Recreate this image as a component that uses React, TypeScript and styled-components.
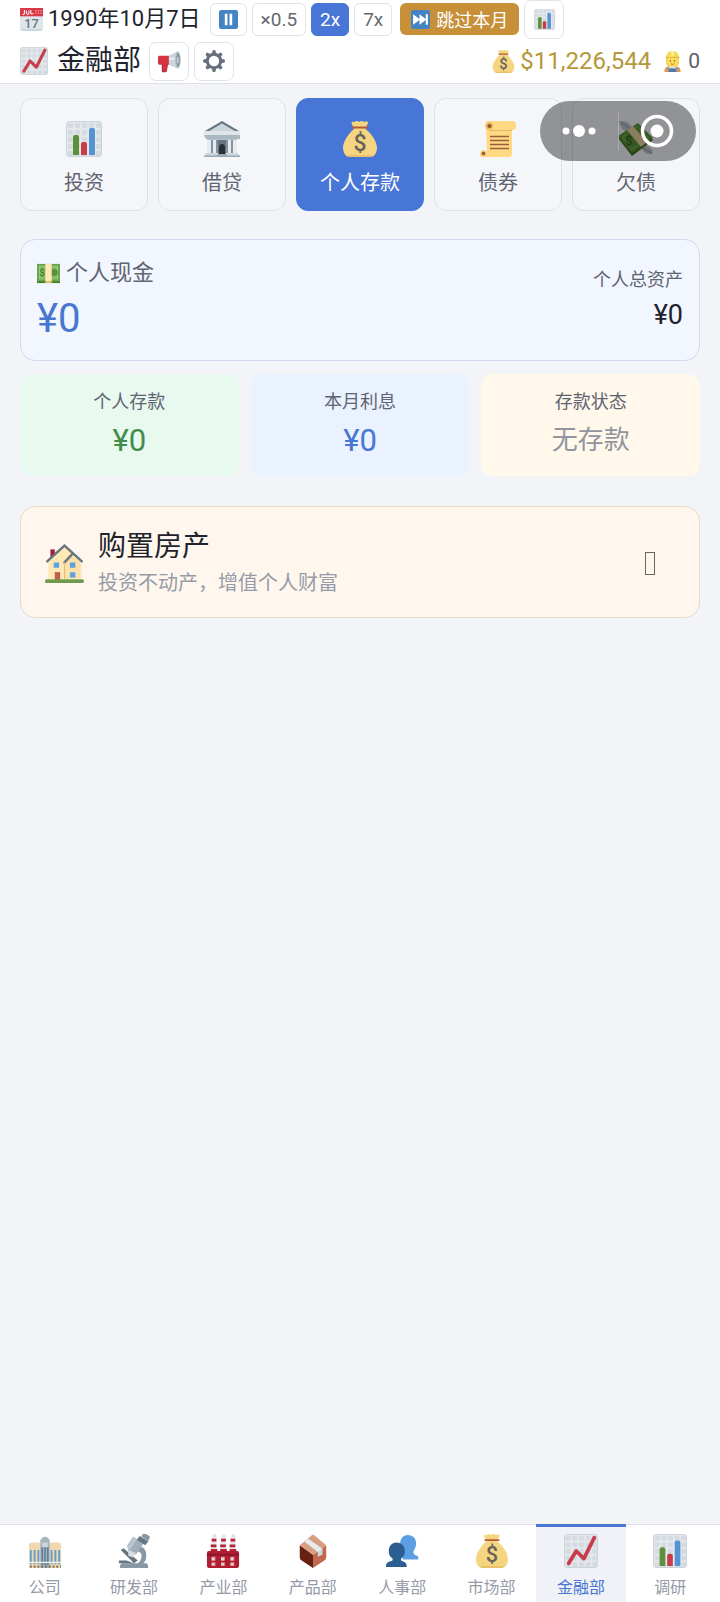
import { useState } from 'react';
import type { ReactNode } from 'react';
import styled, { createGlobalStyle } from 'styled-components';

const GlobalStyle = createGlobalStyle`
  * {
    box-sizing: border-box;
  }

  body {
    margin: 0;
    background: #f2f4f8;
    color: #20232b;
    font-family: Roboto, 'Noto Sans CJK SC', sans-serif;
  }

  button {
    margin: 0;
    padding: 0;
    border: none;
    background: none;
    color: inherit;
    font: inherit;
    cursor: pointer;
  }
`;

const Page = styled.div`
  display: flex;
  flex-direction: column;
  min-height: 100vh;
`;

const Header = styled.header`
  display: flex;
  flex-direction: column;
  gap: 4px;
  padding: 0 20px 3px;
  background: white;
  border-bottom: 1px solid #dcdfe8;
`;

const HeaderRow = styled.div`
  display: flex;
  align-items: center;
  gap: 5px;
  height: 38px;
`;

const DateText = styled.time`
  margin-right: 4px;
  font-size: 22px;
  line-height: 28px;
  white-space: nowrap;
`;

const SpeedButton = styled.button<{ $active?: boolean }>`
  display: flex;
  align-items: center;
  justify-content: center;
  height: 33px;
  padding: 0 8px;
  border: 1px solid ${(props) => (props.$active ? '#4876d6' : '#e0e2ec')};
  border-radius: 6px;
  background: ${(props) => (props.$active ? '#4876d6' : 'white')};
  color: ${(props) => (props.$active ? 'white' : '#666973')};
  font-size: 19px;
`;

const SkipButton = styled.button`
  display: flex;
  align-items: center;
  gap: 6px;
  height: 32px;
  margin-left: 3px;
  padding: 0 11px;
  border-radius: 6px;
  background: #c68f38;
  color: white;
  font-size: 18px;
  white-space: nowrap;
`;

const IconButton = styled.button`
  display: flex;
  align-items: center;
  justify-content: center;
  width: 40px;
  height: 39px;
  border: 1px solid #e0e2ec;
  border-radius: 7px;
  background: white;
`;

const Title = styled.h1`
  margin: 0 3px 0 4px;
  font-size: 28px;
  font-weight: 400;
  line-height: 36px;
`;

const Funds = styled.div`
  display: flex;
  align-items: center;
  gap: 5px;
  margin-left: auto;
  color: #b5983a;
  font-size: 24px;
`;

const Staff = styled.div`
  display: flex;
  align-items: center;
  gap: 5px;
  margin-left: 6px;
  color: #5c606b;
  font-size: 21px;
`;

const Main = styled.main`
  flex: 1;
  display: flex;
  flex-direction: column;
  padding: 14px 20px;
`;

const Tabs = styled.div`
  display: grid;
  grid-template-columns: repeat(5, 1fr);
  gap: 10px;
  margin-bottom: 28px;
`;

const Tab = styled.button<{ $active: boolean }>`
  display: flex;
  flex-direction: column;
  align-items: center;
  gap: 12px;
  padding: 22px 0 13px;
  border: 1px solid ${(props) => (props.$active ? '#4876d6' : '#dee1e8')};
  border-radius: 12px;
  background: ${(props) => (props.$active ? '#4876d6' : '#f4f6fa')};
  color: ${(props) => (props.$active ? 'white' : '#606470')};
  font-size: 20px;
  line-height: 28px;
`;

const CashCard = styled.section`
  display: flex;
  align-items: center;
  justify-content: space-between;
  margin-bottom: 13px;
  padding: 17px 16px 19px;
  border: 1px solid #d3daec;
  border-radius: 15px;
  background: #f1f6ff;
`;

const CashMain = styled.div`
  display: flex;
  flex-direction: column;
  gap: 8px;
`;

const CashLabel = styled.div`
  display: flex;
  align-items: center;
  gap: 6px;
  color: #606470;
  font-size: 22px;
  line-height: 32px;
`;

const CashValue = styled.div`
  color: #4876d0;
  font-size: 40px;
  line-height: 44px;
`;

const Assets = styled.div`
  display: flex;
  flex-direction: column;
  gap: 6px;
  text-align: right;
`;

const SmallLabel = styled.div`
  color: #606470;
  font-size: 18px;
  line-height: 26px;
`;

const AssetsValue = styled.div`
  font-size: 27px;
  line-height: 32px;
`;

const Stats = styled.section`
  display: grid;
  grid-template-columns: repeat(3, 1fr);
  gap: 12px;
  margin-bottom: 30px;
`;

const StatCard = styled.div<{ $background: string }>`
  display: flex;
  flex-direction: column;
  align-items: center;
  gap: 8px;
  padding: 15px 0 17px;
  border-radius: 12px;
  background: ${(props) => props.$background};
`;

const StatValue = styled.div<{ $color: string; $text?: boolean }>`
  color: ${(props) => props.$color};
  font-size: ${(props) => (props.$text ? '26px' : '31px')};
  line-height: ${(props) => (props.$text ? '34px' : '36px')};
`;

const EstateCard = styled.button`
  display: flex;
  align-items: center;
  gap: 14px;
  padding: 22px 44px 20px 24px;
  border: 1px solid #e6dbc6;
  border-radius: 15px;
  background: #fff7ed;
  text-align: left;
`;

const EstateText = styled.span`
  flex: 1;
  display: flex;
  flex-direction: column;
  gap: 4px;
`;

const EstateTitle = styled.span`
  font-size: 28px;
  line-height: 36px;
`;

const EstateHint = styled.span`
  color: #979ba7;
  font-size: 20px;
  line-height: 28px;
`;

const MissingGlyph = styled.span`
  width: 10px;
  height: 23px;
  border: 1px solid #666;
`;

const Capsule = styled.div`
  position: fixed;
  top: 101px;
  right: 24px;
  display: flex;
  align-items: center;
  width: 156px;
  height: 60px;
  border-radius: 30px;
  background: rgba(0, 0, 0, 0.4);
`;

const CapsuleButton = styled.button`
  flex: 1;
  display: flex;
  align-items: center;
  justify-content: center;
  height: 40px;

  & + & {
    border-left: 1px solid #aaa;
  }
`;

const BottomNav = styled.nav`
  position: sticky;
  bottom: 0;
  display: grid;
  grid-template-columns: repeat(8, 1fr);
  padding-right: 5px;
  background: white;
  box-shadow: inset 0 1px #dcdfe8;
`;

const NavItem = styled.button<{ $active: boolean }>`
  display: flex;
  flex-direction: column;
  align-items: center;
  gap: 8px;
  padding: 7px 0 2px;
  border-top: 3px solid ${(props) => (props.$active ? '#4876d0' : 'transparent')};
  background: ${(props) => (props.$active ? '#f0f2f7' : 'none')};
  color: ${(props) => (props.$active ? '#4876d0' : '#959aa8')};
  font-size: 16px;
  line-height: 24px;
`;

type IconProps = { size: number };

const Svg = ({ size, children }: IconProps & { children: ReactNode }) => (
  <svg width={size} height={size} viewBox="0 0 36 36" aria-hidden="true">
    {children}
  </svg>
);

const cells = [3, 10, 17, 24, 31];

const Grid = () => (
  <>
    <rect width="36" height="36" rx="4" fill="#ccd3da" />
    <rect x="1" y="1" width="34" height="34" rx="3" fill="#e4e8ec" />
    {cells.map((y) =>
      cells.map((x) => (
        <rect key={`${x}-${y}`} x={x - 1} y={y - 1} width="5" height="5" rx="1" fill="#d4dbe1" />
      ))
    )}
  </>
);

const BarsIcon = ({ size }: IconProps) => (
  <Svg size={size}>
    <Grid />
    <path fill="#5c913b" d="M13 34H7V16q0-2 2-2h2q2 0 2 2z" />
    <path fill="#c93d4b" d="M21 34h-6V23q0-2 2-2h2q2 0 2 2z" />
    <path fill="#5593d3" d="M29 34h-6V9q0-2 2-2h2q2 0 2 2z" />
  </Svg>
);

const TrendIcon = ({ size }: IconProps) => (
  <Svg size={size}>
    <Grid />
    <path
      d="M5 31l8-13 8 8L32 4"
      fill="none"
      stroke="#c93d4b"
      strokeWidth="4"
      strokeLinecap="round"
      strokeLinejoin="round"
    />
  </Svg>
);

const CalendarIcon = ({ size }: IconProps) => (
  <Svg size={size}>
    <path fill="#dfe6eb" d="M0 10h36v22q0 4-4 4H4q-4 0-4-4z" />
    <path fill="#ccd6dd" d="M2 33h32v1q-1 2-3 2H5q-2 0-3-2z" />
    <path fill="#d83b47" d="M0 0h36v13H0z" />
    <path d="M4 10c3 1 3-1 3-7M10 4v4q2 4 4 0V4M17 3v6h4" fill="none" stroke="#fff" strokeWidth="1.6" />
    <path d="M24 4h10M24 8h10" stroke="#f4a3a9" strokeWidth="2" strokeDasharray="2 2" />
    <text x="18" y="31" fontSize="20" fontWeight="500" textAnchor="middle" fill="#66757f">
      17
    </text>
  </Svg>
);

const PauseIcon = ({ size }: IconProps) => (
  <Svg size={size}>
    <rect width="36" height="36" rx="4" fill="#4584c4" />
    <path fill="#fff" d="M11 7h5v22h-5zM20 7h5v22h-5z" />
  </Svg>
);

const SkipIcon = ({ size }: IconProps) => (
  <Svg size={size}>
    <rect width="36" height="36" rx="4" fill="#4584c4" />
    <path fill="#fff" d="M4 8l12 9V8l12 9V8h4v20h-4v-9l-12 9v-9L4 28z" />
  </Svg>
);

const MegaphoneIcon = ({ size }: IconProps) => (
  <Svg size={size}>
    <path fill="#9f2438" d="M6 20h10l-2 13q-1 2-3 2H8q-2 0-2-2z" />
    <path fill="#d4333f" d="M2 9h16v14H2q-2 0-2-3v-8q0-3 2-3zM7 22h7v9q0 3-3 3H9q-2 0-2-3z" />
    <path fill="#cbd5dc" d="M17 9L31 2v27L17 23z" />
    <path fill="#e4e9ed" d="M17 13l14-3v4l-14 2z" />
    <ellipse cx="31" cy="15.5" rx="4.5" ry="13.5" fill="#b4c0c9" />
    <ellipse cx="31.5" cy="15.5" rx="3" ry="11" fill="#8899a6" />
    <ellipse cx="31" cy="16" rx="1.5" ry="5" fill="#cbd5dc" />
  </Svg>
);

const GearIcon = ({ size }: IconProps) => (
  <Svg size={size}>
    <circle cx="18" cy="18" r="11" fill="none" stroke="#66707c" strokeWidth="5" />
    {[0, 45, 90, 135, 180, 225, 270, 315].map((angle) => (
      <path key={angle} transform={`rotate(${angle} 18 18)`} fill="#66707c" d="M14.500 7l1-6q2.500-2 5 0l1 6z" />
    ))}
  </Svg>
);

const MoneyBagIcon = ({ size }: IconProps) => (
  <Svg size={size}>
    <path
      fill="#f6d580"
      d="M12 8L9.500 2q0-2 3-1 2-2 5 0 2-2 4.500 0 4-2 4 1L23.500 8C29 12 35 20 35 27q0 5-4 8.500H5Q1 32 1 27c0-7 6-15 11-19z"
    />
    <path fill="#e9c16b" d="M5 34h26l-2 2H7z" />
    <path d="M11 6.500h14" stroke="#b65a35" strokeWidth="2" strokeLinecap="round" />
    <text x="18" y="30" fontSize="23" fontWeight="500" textAnchor="middle" fill="#67635b">
      $
    </text>
  </Svg>
);

const WorkerIcon = ({ size }: IconProps) => (
  <Svg size={size}>
    <path fill="#8b9aa8" d="M5 36q0-9 8-10h10q8 1 8 10z" />
    <path fill="#ef9645" d="M4 36q0-8 5-9v9zM32 36q0-8-5-9v9z" />
    <path fill="#dbe5eb" d="M12 25h12v5H12z" />
    <path fill="#55799f" d="M12 30h12v6H12z" />
    <path fill="#f0cf59" d="M7 9h22v13q-2 5-5 5H12q-3 0-5-5z" />
    <ellipse cx="18" cy="17" rx="9" ry="10" fill="#ffdc5d" />
    <path fill="#f6dc55" d="M7 12Q7 0 18 0t11 12z" />
    <path fill="#fff2a0" d="M16 0h4v9h-4z" />
    <path fill="#e3bd45" d="M6 10h24v2H6z" />
    <circle cx="14.5" cy="17" r="1.2" fill="#664500" />
    <circle cx="21.5" cy="17" r="1.2" fill="#664500" />
    <path d="M15 22q3 2 6 0" fill="none" stroke="#b5663a" strokeWidth="1.5" />
  </Svg>
);

const BankIcon = ({ size }: IconProps) => (
  <Svg size={size}>
    <path fill="#b7c3cc" d="M3 18h30v14H3z" />
    <path fill="#8493a0" d="M7 19h2v13H7zM12 19h2v13h-2zM22 19h2v13h-2zM27 19h2v13h-2z" />
    <path fill="#e6ebef" d="M3 19h4v13H3zM9 19h3v13H9zM24 19h3v13h-3zM29 19h4v13h-4z" />
    <path fill="#66757f" d="M14 19h8v14h-8z" />
    <path fill="#292f33" d="M15 33v-6q0-4 3-4t3 4v6z" />
    <path fill="#66757f" d="M18 0l17 10H1z" />
    <path fill="#ccd6dd" d="M18 2.500L31 10H5z" />
    <path fill="#dfe5e9" d="M0 10h36v6H0z" />
    <path fill="#aab8c2" d="M0 14h36v4H2z" />
    <path fill="#ccd6dd" d="M2 32h11v4H0zM23 32h11l2 4H23z" />
    <path fill="#9aaab4" d="M0 34.500h13V36H0zM23 34.500h13V36H23zM13 33h10v3H13z" />
  </Svg>
);

const ScrollIcon = ({ size }: IconProps) => (
  <Svg size={size}>
    <path fill="#ffd983" d="M6 3h26v30q0 3-3 3H3q3-1 4-5z" />
    <path fill="#e8b561" d="M7 8h25v2H10z" />
    <path fill="#ffd983" d="M8 0h25q3 0 3 4.500T33 9H8Q5 9 5 4.500T8 0z" />
    <circle cx="9.5" cy="5" r="3.5" fill="#e8b561" />
    <circle cx="9.5" cy="5" r="2" fill="#8f563a" />
    <path fill="#ffd983" d="M3 29q4 0 4 3.500T3 36t-3-3.500T3 29z" />
    <circle cx="3.5" cy="32.5" r="2" fill="#a05f43" />
    <path d="M10 15.500h19M10 19.500h19M10 23.500h19M10 27.500h19" stroke="#9c5b3c" strokeWidth="1.7" />
  </Svg>
);

const FlyingMoneyIcon = ({ size }: IconProps) => (
  <Svg size={size}>
    <path fill="#b7c4cd" d="M12 13Q2 9 1 0q10-1 15 9zM27 24q7 2 8 8-6 4-12-5z" />
    <path d="M3 2q7 2 10 8M25 27q4 2 8 5" fill="none" stroke="#8798a5" />
    <path fill="#3e721d" d="M0 17L20 4l15 15-21 16z" />
    <path fill="#5c913b" d="M0 15L20 2l15 15-21 15z" />
    <path fill="#84b566" d="M4 16L20 5l11 12-17 12z" />
    <path fill="#5c913b" d="M5 16L20 6l10 11-16 11z" />
    <path fill="#e9cfa0" d="M9 9l6-4 14 16-6 5z" />
    <text x="11" y="24" fontSize="13" textAnchor="middle" fill="#2f5b19">
      $
    </text>
  </Svg>
);

const BanknoteIcon = ({ size }: IconProps) => (
  <Svg size={size}>
    <path fill="#4c8229" d="M0 6h36v27H0z" />
    <path fill="#6ba34f" d="M0 3h36v27H0z" />
    <path fill="#a7d28b" d="M3 6h30v21H3z" />
    <path fill="#80bd60" d="M4 7h28v19H4z" />
    <circle cx="27" cy="16.5" r="5.5" fill="#5c913b" />
    <path fill="#ffe8b6" d="M13 3h10v27H13z" />
    <path fill="#e8c874" d="M13 30h10v3H13z" />
    <text x="8" y="22" fontSize="15" textAnchor="middle" fill="#3e721d">
      $
    </text>
  </Svg>
);

const HouseIcon = ({ size }: IconProps) => (
  <Svg size={size}>
    <path fill="#9f2039" d="M5 5h4v10H5z" />
    <path fill="#ffe8b6" d="M3 15L18 2l15 13v17H3z" />
    <path fill="#f3d493" d="M17 17l7-7 10 8v14H18z" opacity="0.3" />
    <path d="M2 16L18 1.500 34 16M18 17l6.500-7" fill="none" stroke="#66757f" strokeWidth="2.2" strokeLinecap="round" />
    <path d="M18 17v15" stroke="#e2bd78" />
    <path fill="#5da1e0" d="M8 17h5v5H8zM23 17h5v5h-5zM23 26h5v5h-5z" />
    <path fill="#bd6245" d="M9 26h5v8H9z" />
    <rect y="32.500" width="36" height="3.500" rx="1.700" fill="#6f9a4a" />
  </Svg>
);

const CompanyIcon = ({ size }: IconProps) => (
  <Svg size={size}>
    <path fill="#efd8ae" d="M1 12q0-3 3-3h7q2 0 2 2h10q0-2 2-2h7q3 0 3 3v24H1z" />
    <path d="M3 17v15M7 17v15M11 17v15M25 17v15M29 17v15M33 17v15" stroke="#65a0cc" strokeWidth="2" />
    <path fill="#a7b4bd" d="M13 36V7q2-4 5-4t5 4v29z" />
    <path fill="#ccd6dd" d="M15 9h6v5h-6z" />
    <path d="M15 14v19M18 14v19M21 14v19" stroke="#547994" strokeWidth="1.5" />
    <path d="M1 30h34" stroke="#eef2f4" strokeWidth="1.5" />
    <path d="M2 34.500h33" stroke="#796f66" strokeWidth="2.5" strokeDasharray="2 2" />
  </Svg>
);

const MicroscopeIcon = ({ size }: IconProps) => (
  <Svg size={size}>
    <path fill="#8899a6" d="M22 13q9 0 9 10 0 5-3 8h3q2 0 2 5H3q0-5 3-5h16q4-3 4-8 0-4-5-5z" />
    <path fill="#66757f" d="M4 17l3-2 15 13-4 3zM2 28h8l8 3H2z" />
    <path fill="#9fb0bb" d="M17 3l11 7-8 12-8-2-1-8z" />
    <path fill="#d7dfe5" d="M12 17l8 3-3 5-5-2z" />
    <path fill="#b9c6cf" d="M17 3l4 3-8 12-2-4z" />
    <path fill="#66757f" d="M24 2l9 6-3 4-9-6z" />
    <path fill="#8899a6" d="M27 0h4l4 3-2 5-7-5z" />
  </Svg>
);

const FactoryIcon = ({ size }: IconProps) => (
  <Svg size={size}>
    {[5, 15, 25].map((x) => (
      <g key={x}>
        <path fill="#e9e5e7" d={`M${x + 1} 3h5l1 17h-7z`} />
        <path fill="#b72336" d={`M${x + 1} 5h5v3h-5zM${x} 11h6v3h-6zM${x} 16h7v4h-7z`} />
        <circle cx={x + 4} cy="2" r="2" fill="#dfe4e7" />
      </g>
    ))}
    <path fill="#b01c30" d="M1 20q0-2 2-2h30q2 0 2 2v13q0 3-3 3H4q-3 0-3-3z" />
    <path fill="#8d1628" d="M1 21h34v2H1z" />
    <path fill="#df8b89" d="M6 24h4v4H6zM16 24h4v4h-4zM26 24h4v4h-4zM6 30h4v4H6zM16 30h4v4h-4zM26 30h4v4h-4z" />
    <path fill="#d8dce2" d="M6 25h3v3H6zM16 25h3v3h-3zM26 25h3v3h-3zM6 31h3v2H6zM16 31h3v2h-3zM26 31h3v2h-3z" />
  </Svg>
);

const BoxIcon = ({ size }: IconProps) => (
  <Svg size={size}>
    <path fill="#662113" d="M4 12l14 10v14L6 28q-2-1-2-3z" />
    <path fill="#c1694f" d="M32 12L18 22v14l12-8q2-1 2-3z" />
    <path fill="#d99e82" d="M4 12L17 1q1-1 2 0l13 11-14 10z" />
    <path fill="#ccd6dd" d="M9 8l4-3 15 11v6l-5 2v-6z" />
    <path fill="#e6ebef" d="M9 8l4-3 15 11-5 3z" />
  </Svg>
);

const PeopleIcon = ({ size }: IconProps) => (
  <Svg size={size}>
    <path
      fill="#5c9fe4"
      d="M24 1c6 0 9 4 9 9 0 4-2 6-3 9q0 3 4 4 2 1 1 4H19l-3-16c0-6 3-10 8-10z"
    />
    <path
      fill="#2b5f91"
      d="M12 9c6 0 9 4 9 9 0 4-1 6-4 8v2l4 2q2 1 2 5H1q0-4 2-5l5-2v-2c-3-2-4-4-4-8 0-5 3-9 8-9z"
    />
  </Svg>
);

const tabs = [
  { label: '投资', Icon: BarsIcon },
  { label: '借贷', Icon: BankIcon },
  { label: '个人存款', Icon: MoneyBagIcon },
  { label: '债券', Icon: ScrollIcon },
  { label: '欠债', Icon: FlyingMoneyIcon },
];

const departments = [
  { label: '公司', Icon: CompanyIcon },
  { label: '研发部', Icon: MicroscopeIcon },
  { label: '产业部', Icon: FactoryIcon },
  { label: '产品部', Icon: BoxIcon },
  { label: '人事部', Icon: PeopleIcon },
  { label: '市场部', Icon: MoneyBagIcon },
  { label: '金融部', Icon: TrendIcon },
  { label: '调研', Icon: BarsIcon },
];

const speeds = ['×0.5', '2x', '7x'];

const App = () => {
  const [speed, setSpeed] = useState('2x');
  const [tab, setTab] = useState('个人存款');
  const [department, setDepartment] = useState('金融部');

  return (
    <Page>
      <GlobalStyle />
      <Header>
        <HeaderRow>
          <CalendarIcon size={23} />
          <DateText>1990年10月7日</DateText>
          <SpeedButton aria-label="暂停">
            <PauseIcon size={19} />
          </SpeedButton>
          {speeds.map((item) => (
            <SpeedButton key={item} $active={item === speed} onClick={() => setSpeed(item)}>
              {item}
            </SpeedButton>
          ))}
          <SkipButton>
            <SkipIcon size={19} />
            跳过本月
          </SkipButton>
          <IconButton aria-label="报表">
            <BarsIcon size={21} />
          </IconButton>
        </HeaderRow>
        <HeaderRow>
          <TrendIcon size={28} />
          <Title>金融部</Title>
          <IconButton aria-label="公告">
            <MegaphoneIcon size={23} />
          </IconButton>
          <IconButton aria-label="设置">
            <GearIcon size={22} />
          </IconButton>
          <Funds>
            <MoneyBagIcon size={23} />
            $11,226,544
          </Funds>
          <Staff>
            <WorkerIcon size={21} />
            0
          </Staff>
        </HeaderRow>
      </Header>

      <Main>
        <Tabs>
          {tabs.map(({ label, Icon }) => (
            <Tab key={label} $active={label === tab} onClick={() => setTab(label)}>
              <Icon size={36} />
              {label}
            </Tab>
          ))}
        </Tabs>

        <CashCard>
          <CashMain>
            <CashLabel>
              <BanknoteIcon size={23} />
              个人现金
            </CashLabel>
            <CashValue>¥0</CashValue>
          </CashMain>
          <Assets>
            <SmallLabel>个人总资产</SmallLabel>
            <AssetsValue>¥0</AssetsValue>
          </Assets>
        </CashCard>

        <Stats>
          <StatCard $background="#e8f9f0">
            <SmallLabel>个人存款</SmallLabel>
            <StatValue $color="#448c4c">¥0</StatValue>
          </StatCard>
          <StatCard $background="#eaf1ff">
            <SmallLabel>本月利息</SmallLabel>
            <StatValue $color="#4876d0">¥0</StatValue>
          </StatCard>
          <StatCard $background="#fff8eb">
            <SmallLabel>存款状态</SmallLabel>
            <StatValue $color="#9295a0" $text>
              无存款
            </StatValue>
          </StatCard>
        </Stats>

        <EstateCard>
          <HouseIcon size={39} />
          <EstateText>
            <EstateTitle>购置房产</EstateTitle>
            <EstateHint>投资不动产，增值个人财富</EstateHint>
          </EstateText>
          <MissingGlyph />
        </EstateCard>
      </Main>

      <Capsule>
        <CapsuleButton aria-label="更多">
          <svg width="34" height="12" viewBox="0 0 34 12" fill="#fff">
            <circle cx="4" cy="6" r="3.5" />
            <circle cx="17" cy="6" r="6" />
            <circle cx="30" cy="6" r="3.5" />
          </svg>
        </CapsuleButton>
        <CapsuleButton aria-label="关闭">
          <svg width="34" height="34" viewBox="0 0 34 34">
            <circle cx="17" cy="17" r="14.5" fill="none" stroke="#fff" strokeWidth="3.5" />
            <circle cx="17" cy="17" r="6.5" fill="#fff" />
          </svg>
        </CapsuleButton>
      </Capsule>

      <BottomNav>
        {departments.map(({ label, Icon }) => (
          <NavItem key={label} $active={label === department} onClick={() => setDepartment(label)}>
            <Icon size={34} />
            {label}
          </NavItem>
        ))}
      </BottomNav>
    </Page>
  );
};

export default App;
